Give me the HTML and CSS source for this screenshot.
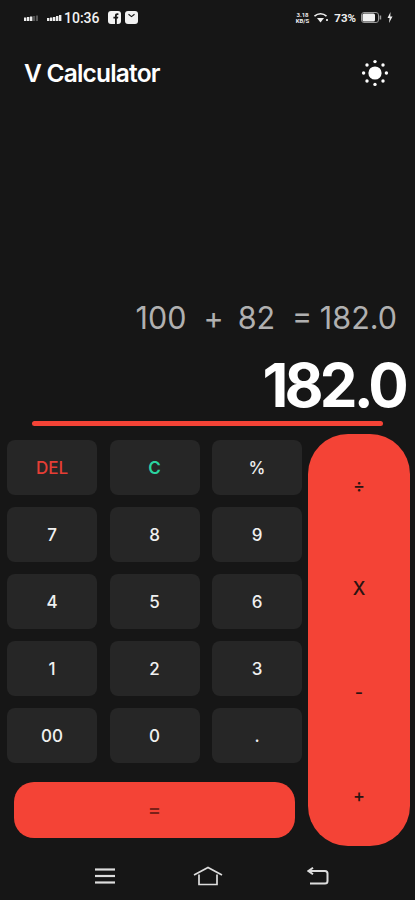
FILE: index.html
```html
<!DOCTYPE html>
<html lang="en">
<head>
<meta charset="utf-8">
<title>V Calculator</title>
<link rel="stylesheet" href="styles.css">
</head>
<body>
<div class="app">
  <div class="status">
    <div class="status-left">
      <svg class="sig" width="14" height="6" viewBox="0 0 14 6"><g fill="#eee"><rect x="0" y="2.5" width="2.4" height="3.5"/><rect x="3" y="2" width="2.4" height="4"/><rect x="6" y="1.5" width="2.4" height="4.5"/></g><g fill="#555"><rect x="9" y="1" width="2.2" height="5"/><rect x="12" y="0.5" width="2" height="5.5"/></g></svg>
      <svg class="sig2" width="15" height="6" viewBox="0 0 15 6"><g fill="#eee"><rect x="0" y="3" width="2.4" height="3"/><rect x="3" y="2.5" width="2.4" height="3.5"/><rect x="6" y="2" width="2.4" height="4"/><rect x="9" y="1" width="2.4" height="5"/><rect x="12" y="0" width="2.4" height="6"/></g></svg>
      <span class="time">10:36</span>
      <svg class="app-ico" width="13" height="13" viewBox="0 0 13 13"><rect width="13" height="13" rx="3" fill="#f2f2f2"/><path d="M7 13V7.6H5.4V5.7H7V4.5C7 3 7.9 2.3 9.2 2.3H10.4V4H9.5C9 4 8.8 4.3 8.8 4.8V5.7H10.3L10 7.6H8.8V13Z" fill="#161616"/></svg>
      <svg class="app-ico" width="13" height="13" viewBox="0 0 13 13"><rect width="13" height="13" rx="3" fill="#f2f2f2"/><path d="M3.5 3.2L6.5 5.6L9.5 3.2" fill="none" stroke="#161616" stroke-width="1.1"/></svg>
    </div>
    <div class="status-right">
      <span class="speed">3.18<br>KB/S</span>
      <svg width="15" height="10" viewBox="0 0 15 10"><path d="M0.5 3.2C4 0 9 0 12.5 3.2" fill="none" stroke="#eee" stroke-width="1.6"/><path d="M3 5H10L6.5 9.5Z" fill="#eee"/><rect x="12" y="6" width="2" height="2" fill="#ccc"/></svg>
      <span class="pct">73%</span>
      <svg width="21" height="11" viewBox="0 0 21 11"><rect x="0.5" y="0.5" width="17" height="10" rx="2.5" fill="none" stroke="#999"/><rect x="1.5" y="1.5" width="12.5" height="8" rx="1.5" fill="#f2f2f2"/><rect x="18.6" y="3.5" width="1.6" height="4" fill="#999"/></svg>
      <svg class="bolt" width="6" height="11" viewBox="0 0 6 11"><path d="M3.5 0L0.5 6H2.6L2 11L5.5 4.6H3.3Z" fill="#eee"/></svg>
    </div>
  </div>

  <header class="appbar">
    <h1 class="title">V Calculator</h1>
    <svg class="sun" width="28" height="28" viewBox="0 0 28 28"><circle cx="14" cy="14" r="6.6" fill="#fff"/><g fill="#fff"><circle cx="14" cy="2.6" r="1.7"/><circle cx="14" cy="25.4" r="1.7"/><circle cx="2.6" cy="14" r="1.7"/><circle cx="25.4" cy="14" r="1.7"/><circle cx="6" cy="6" r="1.7"/><circle cx="22" cy="6" r="1.7"/><circle cx="6" cy="22" r="1.7"/><circle cx="22" cy="22" r="1.7"/></g></svg>
  </header>

  <section class="display">
    <div class="expr"><span>100</span><span class="e-plus">+</span><span>82</span><span class="e-res">= 182.0</span></div>
    <div class="result">182.0</div>
    <div class="rule"></div>
  </section>

  <section class="pad">
    <div class="left">
      <div class="keys">
        <button class="key del">DEL</button>
        <button class="key clr">C</button>
        <button class="key">%</button>
        <button class="key">7</button>
        <button class="key">8</button>
        <button class="key">9</button>
        <button class="key">4</button>
        <button class="key">5</button>
        <button class="key">6</button>
        <button class="key">1</button>
        <button class="key">2</button>
        <button class="key">3</button>
        <button class="key">00</button>
        <button class="key">0</button>
        <button class="key">.</button>
      </div>
      <button class="equals">=</button>
    </div>
    <div class="ops">
      <span>÷</span>
      <span>X</span>
      <span>-</span>
      <span>+</span>
    </div>
  </section>

  <nav class="navbar">
    <svg width="22" height="18" viewBox="0 0 22 18"><g fill="none" stroke="#ddd" stroke-width="2.2"><path d="M1 2.5H21"/><path d="M1 9H21"/><path d="M1 15.5H21"/></g></svg>
    <svg class="home" width="30" height="20" viewBox="0 0 30 20"><g fill="none" stroke="#ddd" stroke-width="1.7"><path d="M1 9L15 1.5L29 9"/><path d="M6 8.5V18.5H24V8.5"/></g></svg>
    <svg width="22" height="18" viewBox="0 0 22 18"><g fill="none" stroke="#ddd" stroke-width="2"><path d="M1.5 4H18C19.7 4 20.5 5 20.5 6.5V14C20.5 15.5 19.7 16.5 18 16.5H3"/><path d="M6 0.8L1.5 4L6 7.2"/></g></svg>
  </nav>
</div>
</body>
</html>
```

FILE: styles.css
```css
* { box-sizing: border-box; }
html, body { margin: 0; padding: 0; }
body { background: #161616; font-family: Inter, "Liberation Sans", sans-serif; }
.app { width: 415px; height: 900px; background: #161616; color: #fff; display: flex; flex-direction: column; overflow: hidden; }

.status { height: 35px; padding: 0 22px 0 24px; display: flex; justify-content: space-between; align-items: center; }
.status-left, .status-right { display: flex; align-items: center; }
.status-left .sig { margin-right: 9px; }
.status-left .sig2 { margin-right: 2px; }
.status-left .app-ico { margin-left: 4px; }
.time { font: 500 14px/16px Roboto, sans-serif; color: #f2f2f2; margin-right: 4px; }
.status-right { gap: 5px; }
.speed { font: 700 6px/6px Roboto, sans-serif; color: #eee; text-align: center; }
.pct { font: 700 11.5px/12px Roboto, sans-serif; color: #eee; }

.appbar { height: 76px; padding: 0 26px 0 24px; display: flex; justify-content: space-between; align-items: center; }
.title { margin: 0; font: 600 24.5px/30px Inter, sans-serif; letter-spacing: -0.8px; color: #fff; }

.display { height: 315px; display: flex; flex-direction: column; justify-content: flex-end; }
.expr { display: flex; justify-content: flex-end; padding-right: 18px; font: 400 30.5px/36px Inter, sans-serif; color: #b0b0b0; }
.e-plus { margin: 0 14px 0 17px; }
.e-res { margin-left: 17px; word-spacing: -1px; }
.result { margin-top: 13px; padding-right: 10px; text-align: right; font: 700 60px/72px Inter, sans-serif; letter-spacing: -3.8px; color: #fff; }
.rule { margin: 0 32px; width: 351px; height: 5px; border-radius: 3px; background: #f44336; }

.pad { display: flex; align-items: flex-start; margin-top: 8px; }
.left { width: 308px; padding: 6px 0 0 7px; }
.keys { display: grid; grid-template-columns: repeat(3, 90px); grid-auto-rows: 55px; column-gap: 12.5px; row-gap: 12px; }
button { border: 0; padding: 0; font-family: inherit; }
.key { background: #262626; border-radius: 8px; color: #f0f0f0; font: 500 17px/20px Inter, sans-serif; }
.del { color: #e53e35; }
.clr { color: #2bd4a0; font-weight: 600; }
.equals { display: block; width: 281px; height: 56px; margin: 19px 0 0 7px; background: #f44336; border-radius: 20px; color: #7a2018; font: 500 20px/24px Inter, sans-serif; }

.ops { width: 102px; height: 412px; background: #f44336; border-radius: 40px; color: #2a1412; font: 500 18px/24px Inter, sans-serif; display: flex; flex-direction: column; align-items: center; justify-content: space-between; padding: 40px 0 38px; }

.navbar { margin-top: 12px; padding: 0 86px 0 94px; display: flex; justify-content: space-between; align-items: center; height: 36px; }
.home { margin-right: 8px; }
```
